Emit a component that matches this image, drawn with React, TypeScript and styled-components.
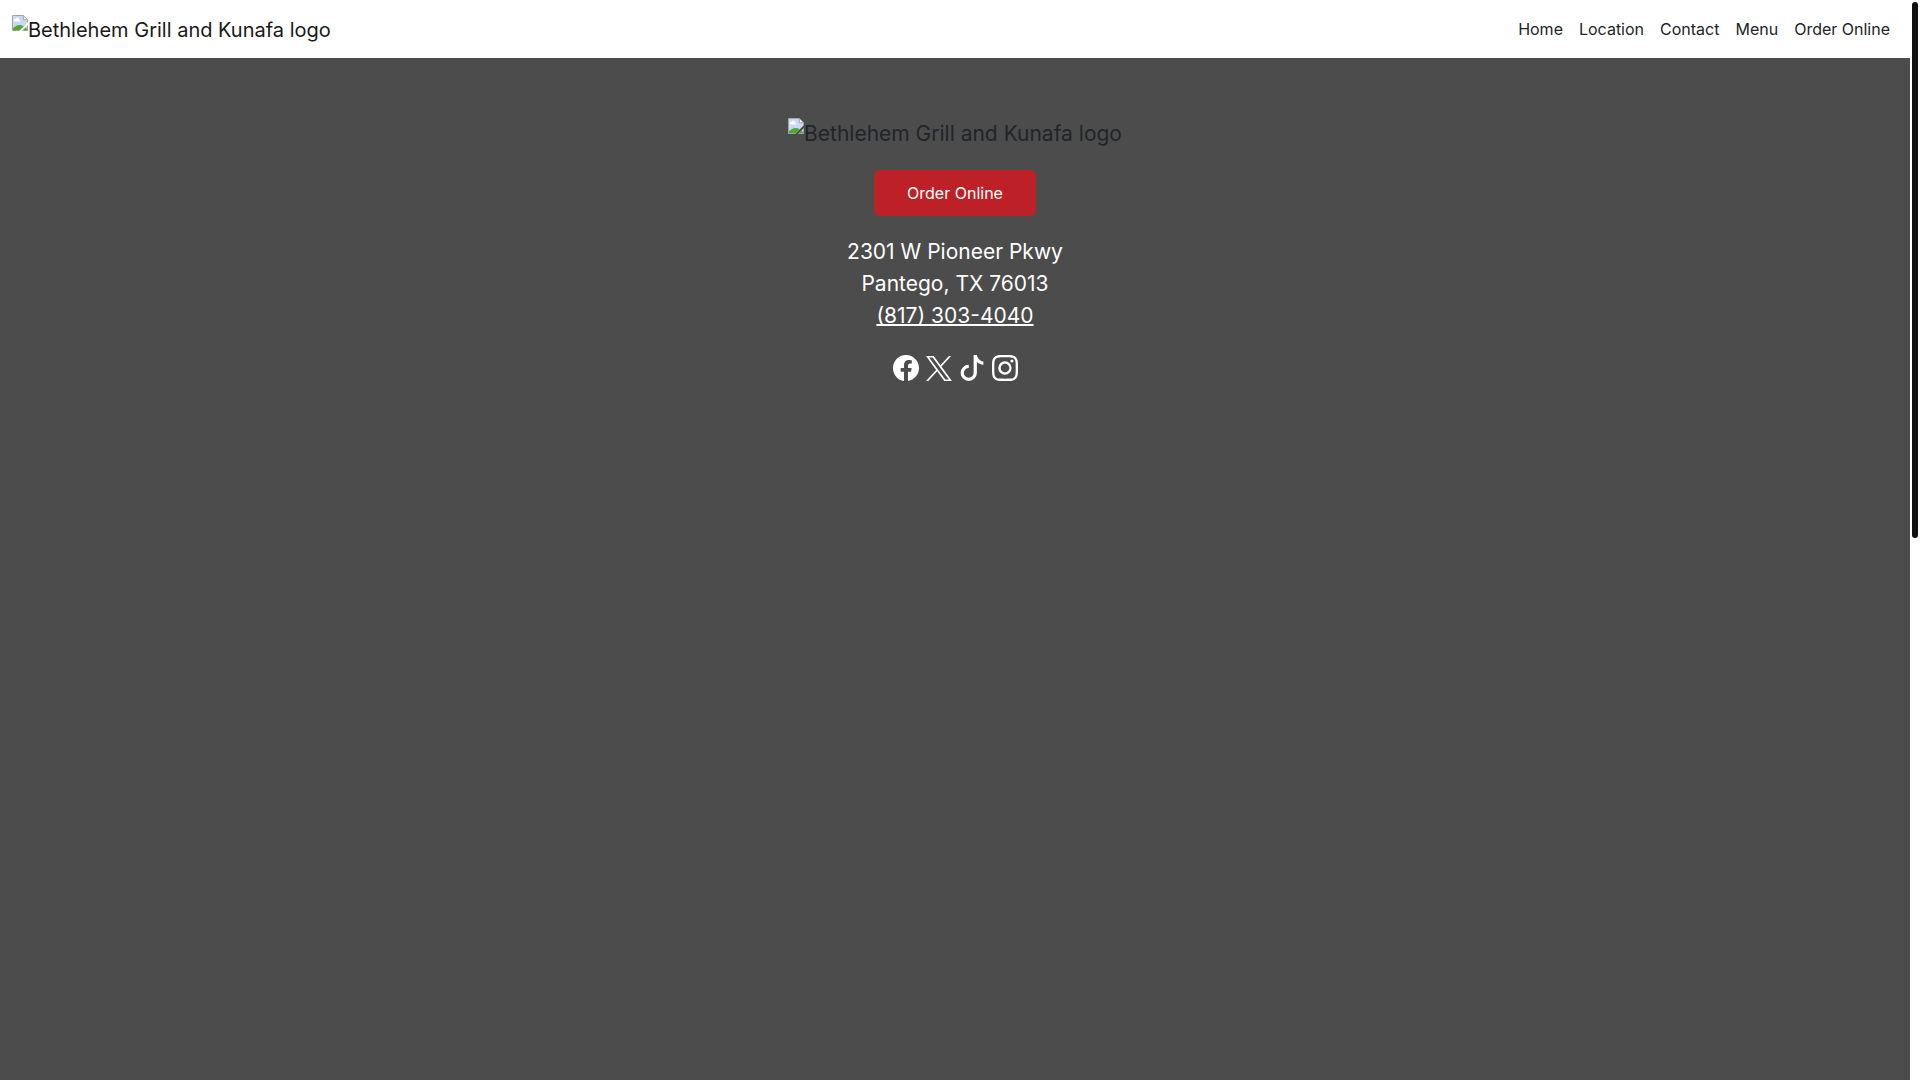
import React, { useId } from "react";
import styled, { createGlobalStyle } from "styled-components";
import { BsFacebook, BsInstagram, BsTiktok } from "react-icons/bs";

const GlobalStyle = createGlobalStyle`
  *, *::before, *::after { box-sizing: border-box; }
  body {
    margin: 0;
    background: #fff;
    color: #212529;
    font-family: Inter, "Liberation Sans", sans-serif;
    font-size: 16px;
    line-height: 24px;
  }
`;

const Shell = styled.div`
  display: flex;
  height: 100vh;
  overflow: hidden;
`;

const Page = styled.div`
  display: flex;
  flex: 1;
  flex-direction: column;
  min-width: 0;
`;

const ScrollTrack = styled.div`
  width: 10px;
  padding: 2px;
  background: #fff;
`;

const ScrollThumb = styled.div`
  height: calc(50% - 2px);
  border-radius: 3px;
  background: #111;
`;

const Header = styled.header`
  display: flex;
  align-items: flex-start;
  justify-content: space-between;
  padding: 15px 12px 13px;
  background: #fff;
`;

const Brand = styled.a`
  color: #191919;
  text-decoration: none;
`;

const LogoText = styled.span<{ $size: number; $line: number }>`
  display: flex;
  align-items: flex-start;
  font-size: ${({ $size }) => $size}px;
  line-height: ${({ $line }) => $line}px;

  svg {
    flex: none;
  }
`;

const NavList = styled.ul`
  display: flex;
  margin: 0;
  padding: 0;
  list-style: none;
`;

const NavLink = styled.a`
  display: block;
  padding: 0 8px;
  color: #212529;
  line-height: 28px;
  text-decoration: none;
`;

const Hero = styled.main`
  display: flex;
  flex: 1;
  flex-direction: column;
  align-items: center;
  padding-top: 60px;
  background: #4c4c4c;
`;

const OrderButton = styled.button`
  margin: 20px 0;
  padding: 11px 33px;
  border: 0;
  border-radius: 6px;
  background: #bd2026;
  color: #fff;
  font: inherit;
  cursor: pointer;
`;

const Address = styled.address`
  color: #fff;
  font-size: 21px;
  font-style: normal;
  line-height: 32px;
  text-align: center;
`;

const Phone = styled.a`
  color: inherit;
  text-decoration-thickness: 2px;
  text-decoration-skip-ink: none;
`;

const Socials = styled.div`
  display: flex;
  gap: 7px;
  margin-top: 23px;
`;

const SocialLink = styled.a`
  display: flex;
  align-items: center;
  color: #fff;
  font-size: 26px;
`;

function MissingImageIcon() {
  const clip = useId();
  return (
    <svg width="16" height="16" viewBox="0 0 16 16" aria-hidden="true">
      <clipPath id={clip}>
        <path d="M0 0H16V7L7 16H0zM16 10V16H10z" />
      </clipPath>
      <g clipPath={`url(#${clip})`}>
        <path d="M.5.5h10.800l4.200 4.200v10.800H.5z" fill="#c8d9f7" />
        <path d="M2.500 6.500a1.500 1.500 0 0 1 1-2.800 2 2 0 0 1 3.600.7 1.200 1.200 0 0 1 .4 2.100z" fill="#fff" />
        <path d="M1 15v-1.800C3 11.600 5 10 7.500 10c3 0 5.500 2 7.500 4v1z" fill="#51a833" />
        <path d="M11.300.5v4.200h4.200z" fill="#fff" />
        <path d="M.5.5h10.800l4.200 4.200v10.800H.5zM11.300.5v4.200h4.200" fill="none" stroke="#a3a3a3" />
      </g>
    </svg>
  );
}

function XLogo() {
  return (
    <svg width="26" height="25" viewBox="0 0 1200 1227" preserveAspectRatio="none" fill="currentColor" aria-hidden="true">
      <path d="M714.163 519.284L1160.89 0H1055.03L667.137 450.887L357.328 0H0L468.492 681.821L0 1226.37H105.866L515.491 750.218L842.672 1226.37H1200L714.137 519.284H714.163ZM569.165 687.828L521.697 619.934L144.011 79.6944H306.615L611.412 515.685L658.880 583.579L1055.080 1150.300H892.476L569.165 687.854V687.828Z" />
    </svg>
  );
}

function Logo({ size, line }: { size: number; line: number }) {
  return (
    <LogoText $size={size} $line={line}>
      <MissingImageIcon />
      Bethlehem Grill and Kunafa logo
    </LogoText>
  );
}

const links = ["Home", "Location", "Contact", "Menu", "Order Online"];

const socials = [
  { label: "Facebook", Icon: BsFacebook },
  { label: "X", Icon: XLogo },
  { label: "TikTok", Icon: BsTiktok },
  { label: "Instagram", Icon: BsInstagram },
];

export default function App() {
  return (
    <>
      <GlobalStyle />
      <Shell>
        <Page>
          <Header>
            <Brand href="#">
              <Logo size={20} line={30} />
            </Brand>
            <nav>
              <NavList>
                {links.map((label) => (
                  <li key={label}>
                    <NavLink href="#">{label}</NavLink>
                  </li>
                ))}
              </NavList>
            </nav>
          </Header>
          <Hero>
            <Logo size={21} line={32} />
            <OrderButton type="button">Order Online</OrderButton>
            <Address>
              2301 W Pioneer Pkwy
              <br />
              Pantego, TX 76013
              <br />
              <Phone href="tel:8173034040">(817) 303-4040</Phone>
            </Address>
            <Socials>
              {socials.map(({ label, Icon }) => (
                <SocialLink key={label} href="#" aria-label={label}>
                  <Icon />
                </SocialLink>
              ))}
            </Socials>
          </Hero>
        </Page>
        <ScrollTrack>
          <ScrollThumb />
        </ScrollTrack>
      </Shell>
    </>
  );
}
